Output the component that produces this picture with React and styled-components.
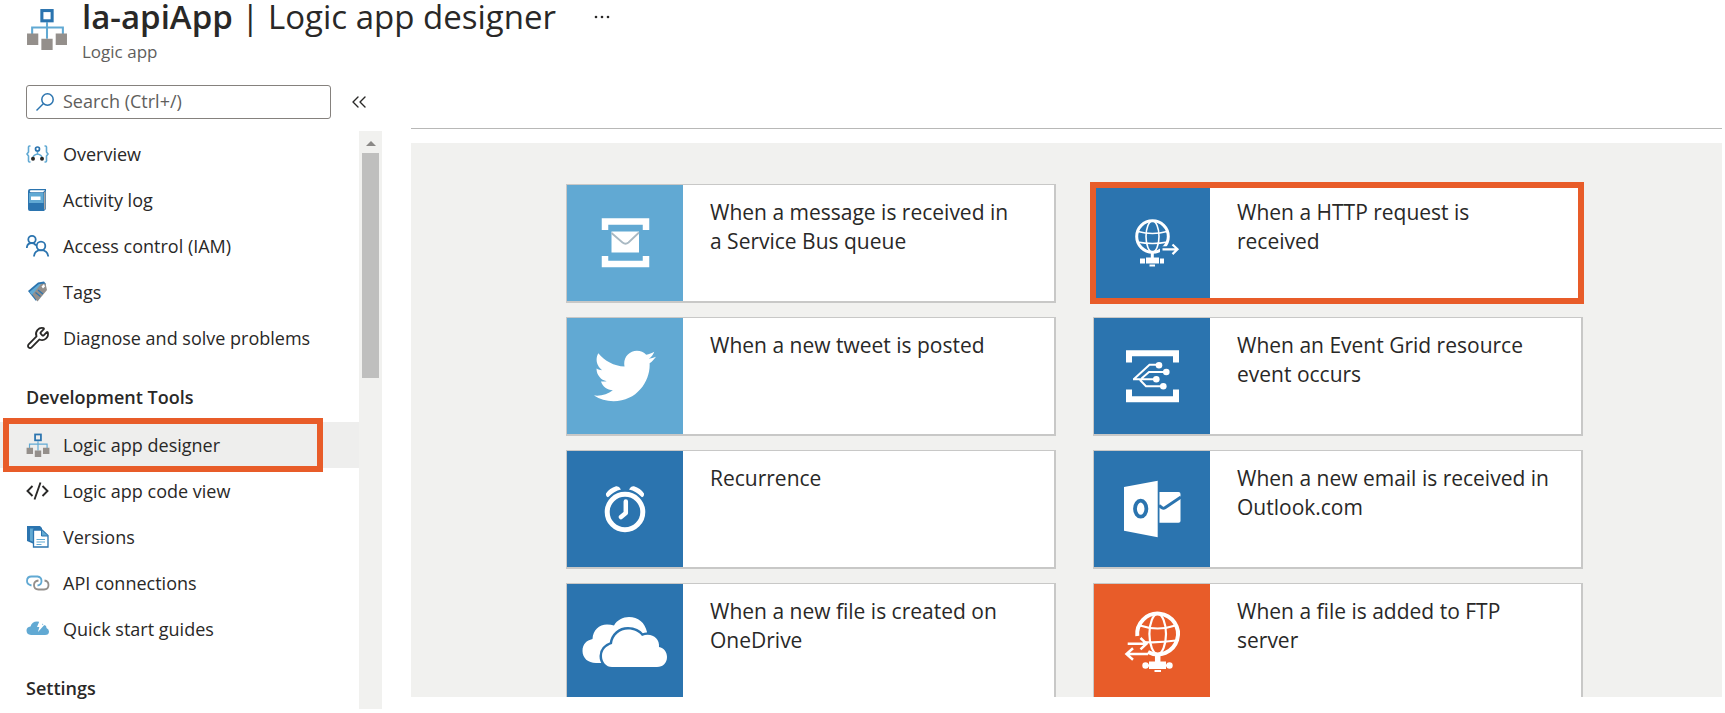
import React from "react";
import styled, { createGlobalStyle } from "styled-components";
import { ChevronsLeft, Wrench } from "lucide-react";
import { FaTwitter } from "react-icons/fa";

const color = {
  text: "#292827",
  muted: "#605e5c",
  blue: "#2b74af",
  sky: "#61a9d3",
  orange: "#e85c29",
  grey: "#f1f1ef",
  line: "#c8c8c7",
  stone: "#948f8b",
};

const GlobalStyle = createGlobalStyle`
  *, *::before, *::after { box-sizing: border-box; }
  body {
    margin: 0;
    background: #fff;
    color: ${color.text};
    font-family: "Open Sans", "Noto Sans", sans-serif;
  }
`;

const Page = styled.div`
  display: flex;
  flex-direction: column;
  height: 100vh;
  overflow: hidden;
`;

const Header = styled.header`
  display: flex;
  align-items: flex-start;
  gap: 14px;
  height: 85px;
  padding: 0 26px;
  flex: none;

  > svg {
    flex: none;
    margin-top: 8px;
  }
`;

const TitleRow = styled.div`
  display: flex;
  align-items: center;
  gap: 36px;
  height: 34px;
`;

const Title = styled.h1`
  margin: 0;
  font-size: 33px;
  line-height: 34px;
  font-weight: 400;
  white-space: nowrap;

  strong {
    font-weight: 600;
  }
`;

const Subtitle = styled.p`
  margin: 6px 0 0;
  font-size: 17px;
  line-height: 24px;
  color: ${color.muted};
`;

const IconButton = styled.button`
  display: flex;
  padding: 0;
  border: 0;
  background: none;
  color: ${color.text};
  cursor: pointer;
`;

const Body = styled.div`
  display: flex;
  flex: 1;
  min-height: 0;
`;

const Sidebar = styled.aside`
  display: flex;
  flex-direction: column;
  flex: none;
  width: 382px;
  padding-bottom: 4px;
`;

const SearchRow = styled.div`
  display: flex;
  align-items: center;
  gap: 16px;
  padding-left: 26px;
`;

const SearchBox = styled.label`
  display: flex;
  align-items: center;
  gap: 8px;
  width: 305px;
  height: 34px;
  padding: 0 8px;
  border: 1px solid #85817d;
  border-radius: 3px;
`;

const SearchInput = styled.input`
  flex: 1;
  min-width: 0;
  height: 30px;
  padding: 0 0 2px;
  border: 0;
  outline: 0;
  background: none;
  font: inherit;
  font-size: 18px;

  &::placeholder {
    color: ${color.muted};
    opacity: 1;
  }
`;

const MenuArea = styled.div`
  display: flex;
  flex: 1;
  min-height: 0;
  margin-top: 12px;
`;

const Menu = styled.nav`
  flex: 1;
  overflow: hidden;
`;

const MenuList = styled.ul`
  margin: 0;
  padding: 0;
  list-style: none;
`;

const MenuHeading = styled.h2`
  margin: 0;
  padding: 24px 0 13px 26px;
  font-size: 18px;
  line-height: 24px;
  font-weight: 600;
`;

const MenuItem = styled.li`
  position: relative;
`;

const MenuLink = styled.a`
  display: flex;
  align-items: center;
  gap: 13px;
  height: 46px;
  padding-left: 26px;
  background: ${(p) => (p.$active ? "#eeeeed" : "transparent")};
  color: ${color.text};
  font-size: 18px;
  line-height: 24px;
  text-decoration: none;
  white-space: nowrap;

  svg {
    flex: none;
  }
`;

const MenuHighlight = styled.span`
  position: absolute;
  inset: -4px 36px -4px 3px;
  border: 6px solid ${color.orange};
  pointer-events: none;
`;

const ScrollTrack = styled.div`
  display: flex;
  flex-direction: column;
  align-items: center;
  flex: none;
  width: 23px;
  background: ${color.grey};
`;

const ScrollArrow = styled.span`
  margin: 10px 0 7px;
  border: 5px solid transparent;
  border-top: 0;
  border-bottom-color: #8a8886;
`;

const ScrollThumb = styled.span`
  width: 17px;
  height: 39%;
  background: #bfbfbe;
`;

const Main = styled.main`
  display: flex;
  flex-direction: column;
  flex: 1;
  min-width: 0;
  margin: 43px 3px 16px 29px;
  border-top: 1px solid #b8b8b7;
`;

const Canvas = styled.div`
  flex: 1;
  min-height: 0;
  margin-top: 14px;
  padding: 41px 0 0 16px;
  overflow: hidden;
  background: ${color.grey};
`;

const CardGrid = styled.div`
  display: grid;
  grid-template-columns: repeat(2, minmax(0, 490px));
  justify-content: center;
  gap: 14px 37px;
`;

const Card = styled.button`
  position: relative;
  display: flex;
  height: 119px;
  padding: 0;
  border: solid ${color.line};
  border-width: 1px 2px 2px 1px;
  background: #fff;
  color: ${color.text};
  font: inherit;
  text-align: left;
  cursor: pointer;
`;

const CardTile = styled.span`
  display: flex;
  align-items: center;
  justify-content: center;
  flex: none;
  width: 116px;
  height: 100%;
  background: ${(p) => p.$tone};
  color: #fff;
`;

const CardText = styled.span`
  max-width: 345px;
  padding: 13px 0 0 27px;
  font-size: 21px;
  line-height: 29px;
  font-weight: 500;
`;

const CardHighlight = styled.span`
  position: absolute;
  inset: -3px -3px -3px -4px;
  border: 6px solid ${color.orange};
  pointer-events: none;
`;

function LogicAppIcon({ size }) {
  return (
    <svg width={size} height={size} viewBox="0 0 41 41" fill="none" aria-hidden="true">
      <path d="M6 26v-7h30v7M20.500 14v16" stroke={color.sky} strokeWidth="2" />
      <rect x="15.500" y="2.500" width="10" height="10" stroke={color.blue} strokeWidth="3" />
      <path d="M1 25h11v11H1zM29 25h11v11H29zM15 30h11v11H15z" fill={color.stone} />
    </svg>
  );
}

function SearchIcon() {
  return (
    <svg width="20" height="20" viewBox="0 0 20 20" fill="none" stroke={color.blue} strokeWidth="1.500" aria-hidden="true">
      <circle cx="12.500" cy="7.500" r="5.700" />
      <path d="M8.500 11.500L1.500 18.500" />
    </svg>
  );
}

function OverviewIcon() {
  return (
    <svg width="24" height="24" viewBox="0 0 24 24" fill="none" aria-hidden="true">
      <path d="M4.500 4H3.500Q2.500 4 2.500 5V10L1 12l1.500 2v5q0 1 1 1h1M18.500 4h1q1 0 1 1v5l1.500 2-1.500 2v5q0 1-1 1h-1" stroke={color.sky} strokeWidth="1.600" />
      <path d="M11.500 9v3M7 16q0-3 4.500-4Q16 13 16 16" stroke={color.sky} strokeWidth="1.400" />
      <circle cx="11.500" cy="7" r="2" stroke={color.blue} strokeWidth="1.700" />
      <circle cx="7" cy="16.800" r="2" fill={color.text} />
      <circle cx="16" cy="16.800" r="2" fill={color.text} />
    </svg>
  );
}

function LogIcon() {
  return (
    <svg width="24" height="24" viewBox="0 0 24 24" aria-hidden="true">
      <path d="M4 1h16v20l-2 2H4q-2 0-2-2V3q0-2 2-2z" fill={color.blue} />
      <path d="M4.500 2.200H19L17 4.300H4.500q-1.500-1 0-2.100z" fill="#fff" />
      <path d="M18 4.500L19.500 3v17.500L18 22z" fill="#a9a6a3" />
      <path d="M3 5h14.500v10H3z" fill={color.sky} />
      <path d="M5 8.500h9.500v3.500H5z" fill="#fff" />
    </svg>
  );
}

function PeopleIcon() {
  return (
    <svg width="24" height="24" viewBox="0 0 24 24" fill="none" stroke={color.blue} strokeWidth="1.800" aria-hidden="true">
      <circle cx="6" cy="5.500" r="3.700" />
      <path d="M.8 14q.2-5 5.200-5 2.500 0 4 2.500" />
      <circle cx="15" cy="12" r="4.300" />
      <path d="M8 22.500q.5-6.300 7-6.300t7.200 6.300" />
    </svg>
  );
}

function TagsIcon() {
  return (
    <svg width="24" height="24" viewBox="0 0 24 24" aria-hidden="true">
      <path d="M2 11L12 2.500l6-1 2 2.500L10 21z" fill={color.blue} />
      <path d="M5 12.500L14 4l5.500-.5L21 10l-9.500 11.500z" fill={color.stone} />
      <path d="M3.500 12L13 4l2 0-9 11z" fill={color.sky} />
      <path d="M9.500 12.500l5 4M12 10l5 4" stroke={color.blue} strokeWidth="1.200" />
      <path d="M15.500 6.500l2.500-2.500 1 2.500-2 2z" fill="#fff" />
    </svg>
  );
}

function CodeIcon() {
  return (
    <svg width="24" height="24" viewBox="0 0 24 24" fill="none" stroke={color.text} strokeWidth="1.900" aria-hidden="true">
      <path d="M6.500 7l-5 5 5 5M16.500 7l5 5-5 5M14.500 3.500l-6 17" />
    </svg>
  );
}

function VersionsIcon() {
  return (
    <svg width="24" height="24" viewBox="0 0 24 24" aria-hidden="true">
      <path d="M1 1h13l2 2v4H8v12L1 16z" fill={color.blue} />
      <path d="M4 3.500h3.500V17L4 15.500z" fill={color.sky} />
      <path d="M7.500 5h8.500l6 5.500V22H7.500z" fill="#fff" stroke={color.blue} strokeWidth="1.300" />
      <path d="M15.500 5v6H22" fill={color.sky} stroke={color.blue} strokeWidth="1" />
      <path d="M10.500 14.500h8.500M10.500 17h8.500M10.500 19.500h5" stroke={color.sky} strokeWidth="1.200" />
    </svg>
  );
}

function LinkIcon() {
  return (
    <svg width="24" height="24" viewBox="0 0 24 24" fill="none" strokeWidth="1.800" aria-hidden="true">
      <path d="M5.500 14.500Q1 13.500 1 10q0-4.500 4.500-4.500h6Q15.500 6 15.500 10q0 4-4 4.500" stroke={color.sky} />
      <path d="M12.500 9.500q-4.500.5-4.500 4.500 0 4.500 4.500 4.500h5.500q4.500 0 4.500-4.500 0-4-4-4.500" stroke={color.stone} />
    </svg>
  );
}

function GuideIcon() {
  return (
    <svg width="24" height="24" viewBox="0 0 24 24" aria-hidden="true">
      <path d="M5 18q-4.500-.3-4.500-4.500Q.5 10 4.500 9.500 6 4.500 11 4.500q4.500 0 6.500 3.500 3 0 3 3 2.500 1 2.500 3.500Q23 18 19 18z" fill={color.sky} />
      <path d="M13.500 4h4l-1.500 3.700h2.500L12 15l1.300-5h-2.300z" fill="#fff" />
    </svg>
  );
}

function TileSvg({ children }) {
  return (
    <svg width="116" height="116" viewBox="0 0 116 116" fill="none" stroke="#fff" aria-hidden="true">
      {children}
    </svg>
  );
}

const ServiceBusArt = () => (
  <TileSvg>
    <path d="M38 45v-8.500h41V45M38 71v8h41v-8" strokeWidth="6.500" />
    <path d="M44.500 46.500h27.500v21H44.500z" fill="#fff" stroke="none" />
    <path d="M44.500 48l11 9.500q3 2.500 6 0l10.500-10" stroke="#a9b9c3" strokeWidth="1.800" />
  </TileSvg>
);

const TwitterArt = () => <FaTwitter size={62} aria-hidden="true" />;

const ClockArt = () => (
  <TileSvg>
    <circle cx="58" cy="61" r="17.800" strokeWidth="5" />
    <path d="M58.800 50.500V62L54 66" strokeWidth="4.500" strokeLinecap="round" strokeLinejoin="round" />
    <path d="M39 42.500Q42.500 37 49 35.200q3-.5 5 3.300-7 1.500-13 7.800-2.500-1-2-3.800zM77 42.500Q73.500 37 67 35.200q-3-.5-5 3.300 7 1.500 13 7.800 2.500-1 2-3.800z" fill="#fff" stroke="none" />
  </TileSvg>
);

const OneDriveArt = () => (
  <TileSvg>
    <path d="M29 79C21 79 15.500 74 15.500 67 15.500 60 19.500 56.500 25.500 55 26 46 32 40.500 40 40.500q4 0 7 1C50 36 56 33 62 33c9 0 16 5.500 18 15v12L40 79z" fill="#fff" stroke="none" />
    <path d="M45 83C39 83 35 78 35 72 35 66 39 62 45 60 46 51 53 45.500 61 45.500 67 45.500 72 48 75 52 84 48 93 54 92 63 97 64 100 68 100 73 100 79 96 83 90 83z" fill="#fff" stroke={color.blue} strokeWidth="5" paintOrder="stroke" />
  </TileSvg>
);

const HttpArt = () => (
  <TileSvg>
    <circle cx="58.500" cy="51.500" r="15.800" strokeWidth="3" />
    <ellipse cx="58.500" cy="51.500" rx="6.500" ry="15.500" strokeWidth="1.600" />
    <path d="M44 46.500q14.500 4 29 0M43.500 57q15 3 30 0" strokeWidth="1.600" />
    <path d="M66 64.300h18" stroke={color.blue} strokeWidth="6" />
    <path d="M68.500 64.300h14M78.500 59.500l5 4.800-5 4.800" strokeWidth="2.200" />
    <path d="M58.300 68v5" strokeWidth="3" />
    <path d="M46 73.500h5v5h-5zM52 72.500h13v6H52zM66 73.500h4v5h-4zM55.500 79.500h5.500v2h-5.500z" fill="#fff" stroke="none" />
  </TileSvg>
);

const EventGridArt = () => (
  <TileSvg>
    <path d="M35 44.500V35.200h47v9.300M35 71.500v9.800h47v-9.800" strokeWidth="6" />
    <path d="M39 61.300h23M40 61l15.500-14.300H65M47.500 60.500l7.500-6.500h17M46 62l6 6.300h17" strokeWidth="2" />
    <g fill="#fff" stroke="none">
      <circle cx="65" cy="47.300" r="3.300" />
      <circle cx="72.300" cy="54" r="3.300" />
      <circle cx="62.300" cy="61.200" r="3.300" />
      <circle cx="69.300" cy="68.300" r="3.300" />
    </g>
  </TileSvg>
);

const OutlookArt = () => (
  <TileSvg>
    <path d="M30 36l33.700-6.300v56.600L30 79.700z" fill="#fff" stroke="none" />
    <ellipse cx="46.700" cy="57.700" rx="5.700" ry="8" stroke={color.blue} strokeWidth="3.800" />
    <path d="M65.500 41h19q2 0 2 2v27q0 1.700-2 1.700h-19z" fill="#fff" stroke="none" />
    <path d="M65 54.500l3 2.300q1.500 1 3 0L87 46" stroke={color.blue} strokeWidth="3" />
  </TileSvg>
);

const FtpArt = () => (
  <TileSvg>
    <path d="M43.300 52A20.400 20.400 0 1 1 54 68" strokeWidth="4" />
    <ellipse cx="63.700" cy="50" rx="8.300" ry="20" strokeWidth="2.200" />
    <path d="M46 41.500q17.500 6 35.500 0M49 58q16 1 33-1.500" strokeWidth="2.200" />
    <path d="M33.700 59.700h18M46.500 54l6 5.700-6 5.700M54 70H32.500M39 64.300L32.500 70l6.500 5.700" strokeWidth="2.500" />
    <path d="M63.700 71v7" strokeWidth="5.500" />
    <path d="M55 77.500h17v7.500H55zM53 80.500h21v2H53zM60.500 86h6.500v2h-6.500z" fill="#fff" stroke="none" />
    <circle cx="51.500" cy="81.500" r="3.200" fill="#fff" stroke="none" />
    <circle cx="75.500" cy="81.500" r="3.200" fill="#fff" stroke="none" />
  </TileSvg>
);

const generalItems = [
  { label: "Overview", icon: <OverviewIcon /> },
  { label: "Activity log", icon: <LogIcon /> },
  { label: "Access control (IAM)", icon: <PeopleIcon /> },
  { label: "Tags", icon: <TagsIcon /> },
  { label: "Diagnose and solve problems", icon: <Wrench size={24} strokeWidth={1.8} aria-hidden="true" /> },
];

const developmentItems = [
  { label: "Logic app designer", icon: <LogicAppIcon size={24} />, active: true },
  { label: "Logic app code view", icon: <CodeIcon /> },
  { label: "Versions", icon: <VersionsIcon /> },
  { label: "API connections", icon: <LinkIcon /> },
  { label: "Quick start guides", icon: <GuideIcon /> },
];

const triggers = [
  { label: "When a message is received in a\u00a0Service Bus queue", art: <ServiceBusArt />, tone: color.sky },
  { label: "When a HTTP request is received", art: <HttpArt />, tone: color.blue, highlighted: true },
  { label: "When a new tweet is posted", art: <TwitterArt />, tone: color.sky },
  { label: "When an Event Grid resource event occurs", art: <EventGridArt />, tone: color.blue },
  { label: "Recurrence", art: <ClockArt />, tone: color.blue },
  { label: "When a new email is received in Outlook.com", art: <OutlookArt />, tone: color.blue },
  { label: "When a new file is created on OneDrive", art: <OneDriveArt />, tone: color.blue },
  { label: "When a file is added to FTP server", art: <FtpArt />, tone: color.orange },
];

function MenuGroup({ items }) {
  return (
    <MenuList>
      {items.map((item) => (
        <MenuItem key={item.label}>
          <MenuLink href="#" $active={item.active} aria-current={item.active ? "page" : undefined}>
            {item.icon}
            {item.label}
          </MenuLink>
          {item.active && <MenuHighlight />}
        </MenuItem>
      ))}
    </MenuList>
  );
}

export default function App() {
  return (
    <Page>
      <GlobalStyle />
      <Header>
        <LogicAppIcon size={42} />
        <div>
          <TitleRow>
            <Title>
              <strong>la-apiApp</strong> | Logic app designer
            </Title>
            <IconButton type="button" aria-label="More options">
              <svg width="20" height="6" viewBox="0 0 20 6" fill="currentColor" aria-hidden="true">
                <circle cx="4" cy="3" r="1.300" />
                <circle cx="10" cy="3" r="1.300" />
                <circle cx="16" cy="3" r="1.300" />
              </svg>
            </IconButton>
          </TitleRow>
          <Subtitle>Logic app</Subtitle>
        </div>
      </Header>
      <Body>
        <Sidebar>
          <SearchRow>
            <SearchBox>
              <SearchIcon />
              <SearchInput type="text" placeholder="Search (Ctrl+/)" aria-label="Search" />
            </SearchBox>
            <IconButton type="button" aria-label="Collapse menu">
              <ChevronsLeft size={24} strokeWidth={1.4} />
            </IconButton>
          </SearchRow>
          <MenuArea>
            <Menu aria-label="Logic app">
              <MenuGroup items={generalItems} />
              <MenuHeading>Development Tools</MenuHeading>
              <MenuGroup items={developmentItems} />
              <MenuHeading>Settings</MenuHeading>
            </Menu>
            <ScrollTrack aria-hidden="true">
              <ScrollArrow />
              <ScrollThumb />
            </ScrollTrack>
          </MenuArea>
        </Sidebar>
        <Main>
          <Canvas>
            <CardGrid>
              {triggers.map((trigger) => (
                <Card type="button" key={trigger.label}>
                  <CardTile $tone={trigger.tone}>{trigger.art}</CardTile>
                  <CardText>{trigger.label}</CardText>
                  {trigger.highlighted && <CardHighlight />}
                </Card>
              ))}
            </CardGrid>
          </Canvas>
        </Main>
      </Body>
    </Page>
  );
}
